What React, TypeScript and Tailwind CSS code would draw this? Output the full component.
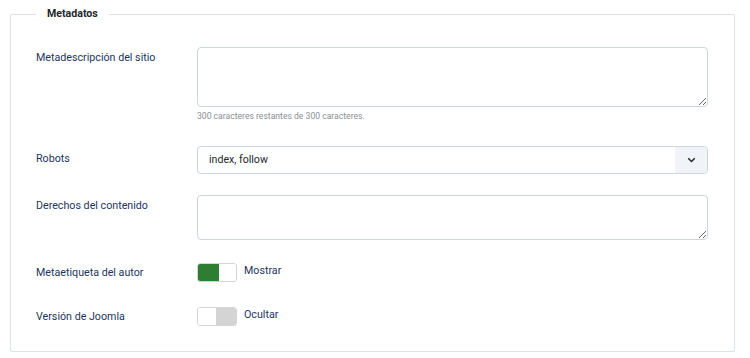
import React from "react";

const labelCls = "w-[161px] shrink-0 text-[10.7px] leading-[18px] text-[#1c3560]";

function Toggle({ on }: { on: boolean }) {
  return (
    <div className="flex h-[19px] w-[40px] overflow-hidden rounded-[3px] border border-[#d2d6db] bg-white">
      {on ? (
        <>
          <div className="h-full w-[21px] bg-[#2e7d32]" />
          <div className="h-full flex-1 bg-white" />
        </>
      ) : (
        <>
          <div className="h-full flex-1 bg-white" />
          <div className="h-full w-[20px] bg-[#d4d4d4]" />
        </>
      )}
    </div>
  );
}

export default function App() {
  return (
    <div className="h-[358px] w-[750px] bg-white" style={{ fontFamily: "Roboto, 'Noto Sans', sans-serif" }}>
      <fieldset className="ml-[10px] mt-[6px] h-[346px] w-[725px] rounded-[2px] border border-[#dde2e7] px-[25px]">
        <legend className="px-[11px] text-[10.6px] font-bold leading-[16px] text-[#22262a]">Metadatos</legend>

        <div className="mt-[25px] flex">
          <div className={labelCls + " pt-[2px]"}>Metadescripción del sitio</div>
          <div className="flex flex-col">
            <textarea className="h-[60px] w-[511px] resize-y rounded-[4px] border border-[#cdd5df] bg-white" />
            <div className="mt-[3px] text-[8.6px] leading-[12px] text-[#8a8f94]">300 caracteres restantes de 300 caracteres.</div>
          </div>
        </div>

        <div className="mt-[24px] flex items-center">
          <div className={labelCls + " -mt-[3px]"}>Robots</div>
          <div className="flex h-[28px] w-[511px] items-center rounded-[4px] border border-[#cdd5df] bg-white">
            <div className="flex-1 pl-[11px] text-[10.6px] text-[#22262a]">index, follow</div>
            <div className="flex h-full w-[32px] items-center justify-center rounded-r-[4px] bg-[#f0f3f7]">
              <svg width="9" height="6" viewBox="0 0 10 7" fill="none">
                <path d="M1.2 1.5 L5 5.2 L8.8 1.5" stroke="#22262a" strokeWidth="1.7" />
              </svg>
            </div>
          </div>
        </div>

        <div className="mt-[21px] flex">
          <div className={labelCls + " pt-[2px]"}>Derechos del contenido</div>
          <textarea className="h-[45px] w-[511px] resize-y rounded-[4px] border border-[#cdd5df] bg-white" />
        </div>

        <div className="mt-[23px] flex items-center">
          <div className={labelCls + " mt-[1px]"}>Metaetiqueta del autor</div>
          <Toggle on={true} />
          <div className="ml-[7px] -mt-[3px] text-[10.7px] leading-[18px] text-[#1c3560]">Mostrar</div>
        </div>

        <div className="mt-[25px] flex items-center">
          <div className={labelCls}>Versión de Joomla</div>
          <Toggle on={false} />
          <div className="ml-[7px] -mt-[3px] text-[10.7px] leading-[18px] text-[#1c3560]">Ocultar</div>
        </div>
      </fieldset>
    </div>
  );
}
